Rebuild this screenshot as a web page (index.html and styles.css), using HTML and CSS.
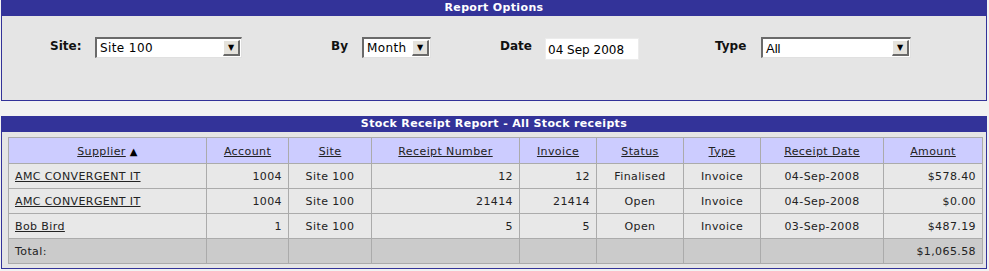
FILE: index.html
```html
<!DOCTYPE html>
<html>
<head>
  <meta charset="utf-8">
  <title>Stock Receipt Report</title>
  <link rel="stylesheet" href="styles.css">
</head>
<body>
  <div class="panel options-panel">
    <div class="panel-title">Report Options</div>
    <div class="options">
      <label class="opt-label">Site:</label>
      <div class="opt-field">
        <div class="fake-select site-select"><span class="sel-text">Site 100</span><span class="sel-btn">&#9660;</span></div>
      </div>
      <label class="opt-label">By</label>
      <div class="opt-field">
        <div class="fake-select by-select"><span class="sel-text">Month</span><span class="sel-btn">&#9660;</span></div>
      </div>
      <label class="opt-label">Date</label>
      <div class="opt-field">
        <input class="date-input" type="text" value="04 Sep 2008">
      </div>
      <label class="opt-label">Type</label>
      <div class="opt-field">
        <div class="fake-select type-select"><span class="sel-text type-text">All</span><span class="sel-btn">&#9660;</span></div>
      </div>
    </div>
  </div>

  <div class="panel report-panel">
    <div class="panel-title">Stock Receipt Report - All Stock receipts</div>
    <div class="report-body">
      <table class="report">
        <colgroup>
          <col style="width:198px"><col style="width:82px"><col style="width:83px">
          <col style="width:148px"><col style="width:77px"><col style="width:87px">
          <col style="width:77px"><col style="width:123px"><col style="width:99px">
        </colgroup>
        <thead>
          <tr>
            <th><a href="#">Supplier</a> <span class="sort">&#9650;</span></th>
            <th><a href="#">Account</a></th>
            <th><a href="#">Site</a></th>
            <th><a href="#">Receipt Number</a></th>
            <th><a href="#">Invoice</a></th>
            <th><a href="#">Status</a></th>
            <th><a href="#">Type</a></th>
            <th><a href="#">Receipt Date</a></th>
            <th><a href="#">Amount</a></th>
          </tr>
        </thead>
        <tbody>
          <tr>
            <td><a href="#">AMC CONVERGENT IT</a></td>
            <td class="num">1004</td>
            <td class="mid">Site 100</td>
            <td class="num">12</td>
            <td class="num">12</td>
            <td class="mid">Finalised</td>
            <td class="mid">Invoice</td>
            <td class="mid">04-Sep-2008</td>
            <td class="num">$578.40</td>
          </tr>
          <tr>
            <td><a href="#">AMC CONVERGENT IT</a></td>
            <td class="num">1004</td>
            <td class="mid">Site 100</td>
            <td class="num">21414</td>
            <td class="num">21414</td>
            <td class="mid">Open</td>
            <td class="mid">Invoice</td>
            <td class="mid">04-Sep-2008</td>
            <td class="num">$0.00</td>
          </tr>
          <tr>
            <td><a href="#">Bob Bird</a></td>
            <td class="num">1</td>
            <td class="mid">Site 100</td>
            <td class="num">5</td>
            <td class="num">5</td>
            <td class="mid">Open</td>
            <td class="mid">Invoice</td>
            <td class="mid">03-Sep-2008</td>
            <td class="num">$487.19</td>
          </tr>
          <tr class="total">
            <td>Total:</td>
            <td></td><td></td><td></td><td></td><td></td><td></td><td></td>
            <td class="num">$1,065.58</td>
          </tr>
        </tbody>
      </table>
    </div>
  </div>
</body>
</html>
```

FILE: styles.css
```css
* {
  box-sizing: border-box;
}

body {
  margin: 0;
  padding: 0 2px 0 1px;
  background: #f2f2f2;
  font-family: "DejaVu Sans", Verdana, sans-serif;
  font-size: 11px;
  color: #222;
}

.panel {
  width: 986px;
  background: #e5e5e5;
  border: 1px solid #333399;
  border-top: none;
}

.panel-title {
  height: 16px;
  line-height: 16px;
  background: #333399;
  color: #fff;
  font-weight: bold;
  font-size: 11px;
  letter-spacing: 0.35px;
  text-align: center;
}

.options-panel {
  height: 101px;
}

.report-panel {
  margin-top: 15px;
}

/* Option row */
.options {
  display: grid;
  grid-template-columns: 45px 236px 31px 138px 45px 170px 46px 150px;
  align-items: start;
  padding: 21px 0 0 48px;
}

.opt-label {
  font-weight: bold;
  font-size: 12px;
  color: #111;
  padding-top: 2px;
}

.fake-select {
  display: flex;
  align-items: center;
  height: 21px;
  background: #fff;
  border-top: 2px solid #6a6a6a;
  border-left: 2px solid #6a6a6a;
  border-right: 1px solid #e0e0e0;
  border-bottom: 1px solid #e0e0e0;
  color: #000;
}

.sel-text {
  flex: 1;
  padding-left: 3px;
  font-family: "DejaVu Sans", Verdana, sans-serif;
  font-size: 12px;
  letter-spacing: 0.4px;
}

.type-text {
  font-family: "Liberation Sans", Arial, sans-serif;
  font-size: 13px;
  letter-spacing: 0;
}

.sel-btn {
  width: 17px;
  height: 16px;
  margin-right: 1px;
  background: #e4e2dc;
  border-top: 1px solid #fff;
  border-left: 1px solid #fff;
  border-right: 2px solid #6a6a6a;
  border-bottom: 2px solid #6a6a6a;
  font-size: 8px;
  line-height: 13px;
  text-align: center;
  color: #000;
}

.site-select {
  width: 147px;
}

.by-select {
  width: 69px;
}

.type-select {
  width: 150px;
}

.date-input {
  width: 94px;
  height: 22px;
  margin-top: 1px;
  border: 1px solid #ececec;
  background: #fff;
  padding: 1px 2px 0;
  font-family: "DejaVu Sans", Verdana, sans-serif;
  font-size: 12px;
  color: #000;
  outline: none;
}

/* Report table */
.report-body {
  padding: 5px 3px 4px 6px;
}

.report {
  width: 974px;
  border-collapse: collapse;
  table-layout: fixed;
  letter-spacing: 0.4px;
}

.report th,
.report td {
  border: 1px solid #ababab;
  padding: 0 6px;
  height: 25px;
  white-space: nowrap;
}

.report th {
  height: 26px;
  padding-top: 1px;
  background: #ccccff;
  font-weight: normal;
  text-align: center;
}

.report td {
  background: #e8e8e8;
}

.report a {
  color: #222;
}

.report .num {
  text-align: right;
}

.report .mid {
  text-align: center;
}

.sort {
  font-size: 10px;
  color: #000;
}

.report .total td {
  background: #cbcbcb;
}
```
